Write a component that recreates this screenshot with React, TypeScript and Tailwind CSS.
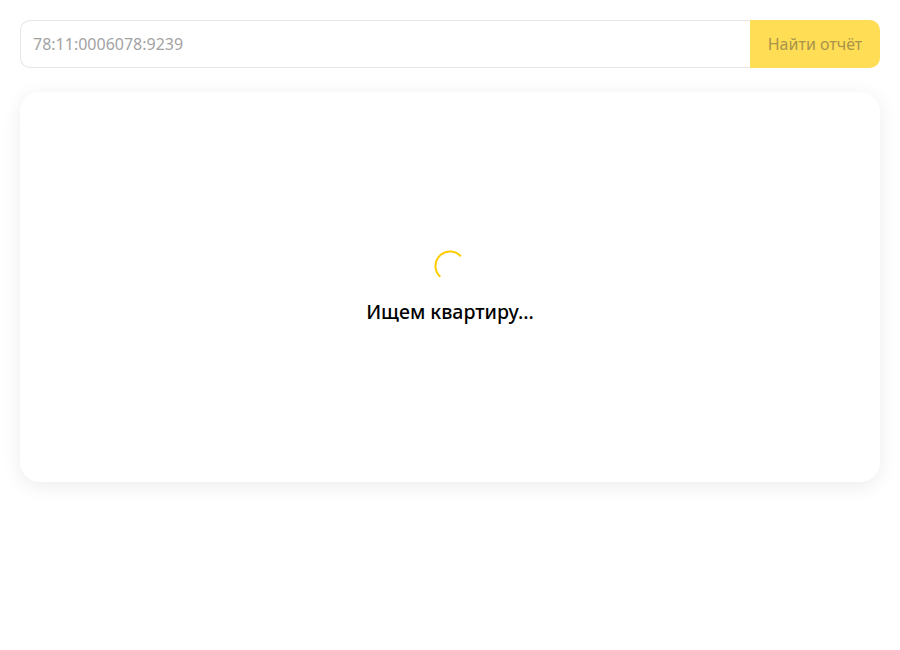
import React from "react";

export default function App() {
  return (
    <div className="min-h-[650px] bg-white p-5" style={{ fontFamily: '"Noto Sans", "Open Sans", sans-serif' }}>
      <div className="flex h-12">
        <input
          className="flex-1 h-12 rounded-l-[10px] border border-r-0 border-[#e6e6e6] px-3 text-base text-[#333] placeholder:text-[#a3a3a3] outline-none"
          placeholder="78:11:0006078:9239"
        />
        <button className="h-12 w-[130px] rounded-r-[10px] bg-[#ffdd55] text-base text-[#a8944a]">
          Найти отчёт
        </button>
      </div>
      <div className="mt-6 flex h-[390px] flex-col items-center justify-center rounded-[20px] bg-white shadow-[0_4px_20px_rgba(0,0,0,0.08)]">
        <svg width="32" height="32" viewBox="0 0 32 32" className="mb-[18px]">
          <circle
            cx="16"
            cy="16"
            r="14.5"
            fill="none"
            stroke="#ffcc00"
            strokeWidth="2"
            strokeDasharray="47 100"
            transform="rotate(132 16 16)"
          />
        </svg>
        <div className="text-[19.5px] font-medium text-black leading-6">Ищем квартиру...</div>
      </div>
    </div>
  );
}
